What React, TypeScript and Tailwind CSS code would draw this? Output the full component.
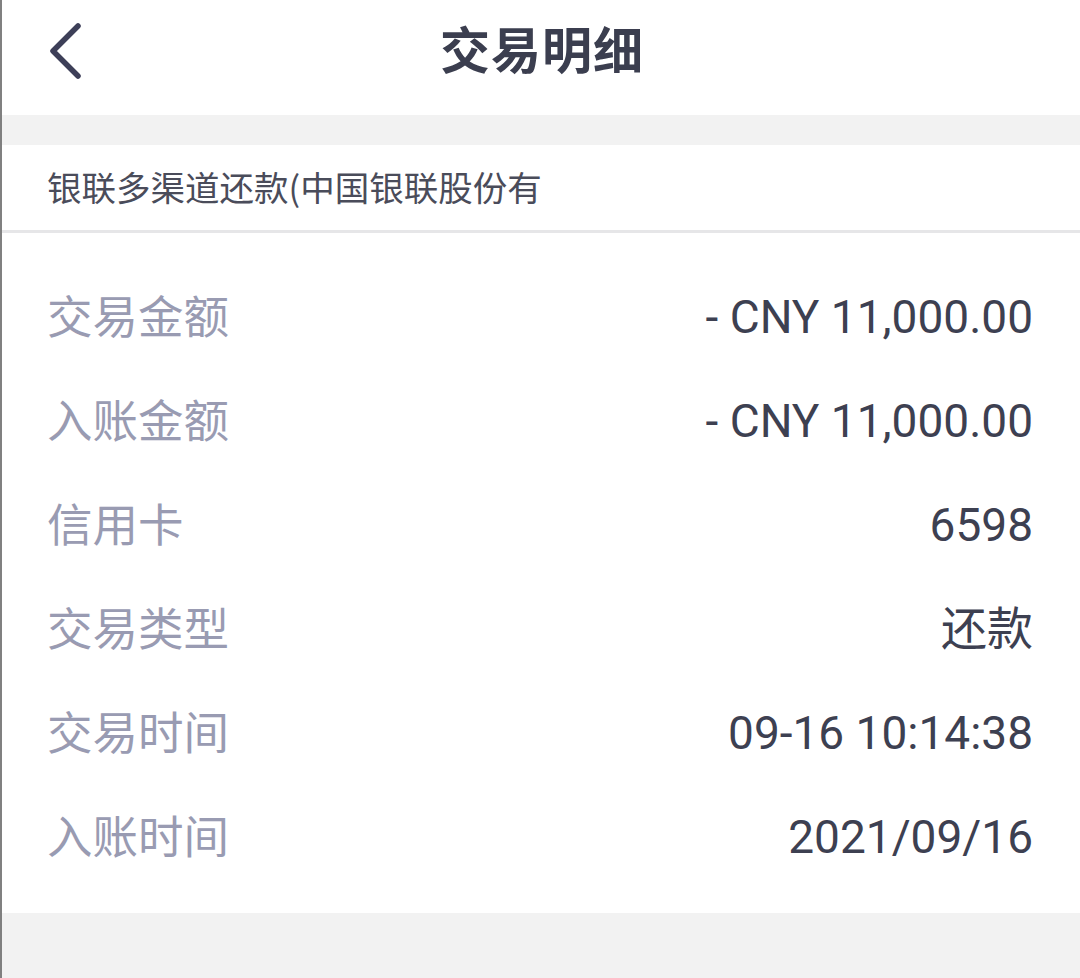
import React from 'react'

const rows = [
    { label: '交易金额', value: '- CNY 11,000.00' },
    { label: '入账金额', value: '- CNY 11,000.00' },
    { label: '信用卡', value: '6598' },
    { label: '交易类型', value: '还款' },
    { label: '交易时间', value: '09-16 10:14:38' },
    { label: '入账时间', value: '2021/09/16' },
]

export default function App() {
    return (
        <div
            className="w-[1080px] h-[978px] bg-[#f2f2f2] border-l-2 border-[#808080] overflow-hidden"
            style={{ fontFamily: 'Roboto, "Noto Sans CJK SC", sans-serif' }}
        >
            {/* header */}
            <div className="relative h-[115px] bg-white flex items-center justify-center">
                <button className="absolute left-[38px] top-[18px] w-[50px] h-[66px] flex items-center justify-center">
                    <svg width="40" height="62" viewBox="0 0 40 62" fill="none">
                        <path d="M33 6 L8 31 L33 56" stroke="#3d3f58" strokeWidth="5.5" strokeLinecap="round" strokeLinejoin="round" />
                    </svg>
                </button>
                <h1 className="text-[50px] leading-none font-bold text-[#3b3e4f] tracking-[1px] -mt-[22px] ml-[2px]" style={{ fontFamily: '"Noto Sans CJK SC", sans-serif' }}>
                    交易明细
                </h1>
            </div>

            <div className="h-[30px]" />

            {/* merchant */}
            <div className="h-[88px] bg-white border-b-[3px] border-[#e6e6e8] flex items-center pl-[45px]">
                <span className="text-[34.5px] leading-none text-[#4a4c5a] -mt-[2px]" style={{ fontFamily: '"Noto Sans CJK SC", sans-serif' }}>
                    银联多渠道还款(中国银联股份有
                </span>
            </div>

            {/* detail list */}
            <div className="bg-white pt-[32px] pb-[24px] pl-[45px] pr-[47px]">
                {rows.map((r) => (
                    <div key={r.label} className="h-[104px] flex items-center justify-between">
                        <span className="text-[45.5px] leading-none text-[#999bb2] -mt-[4px]" style={{ fontFamily: '"Noto Sans CJK SC", sans-serif' }}>
                            {r.label}
                        </span>
                        <span className="text-[46px] leading-none text-[#3d4051]" style={{ fontFamily: 'Roboto, "Noto Sans CJK SC", sans-serif' }}>
                            {r.value}
                        </span>
                    </div>
                ))}
            </div>
        </div>
    )
}
